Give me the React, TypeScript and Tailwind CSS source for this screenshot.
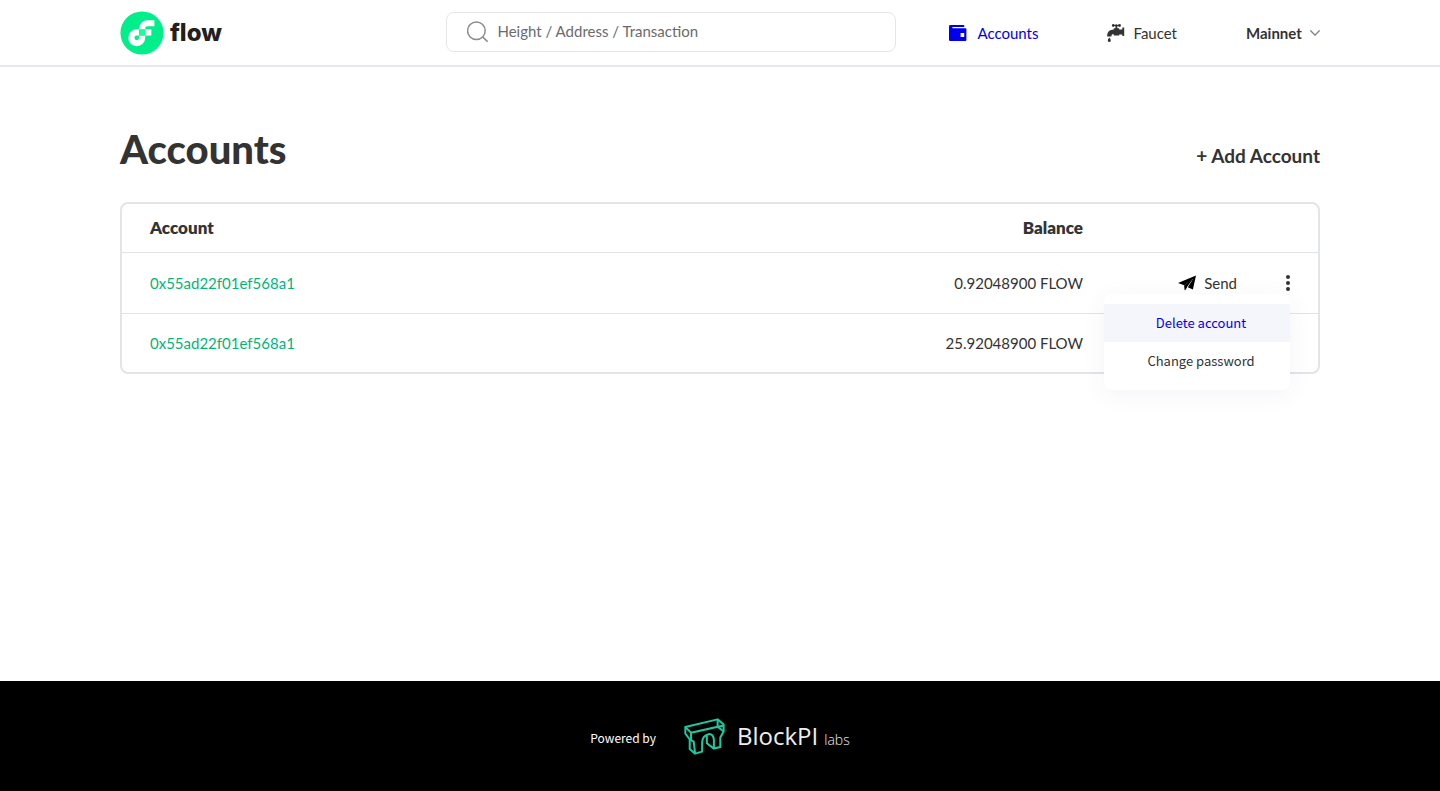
import React from "react";

const accounts = [
  { id: 1, address: "0x55ad22f01ef568a1", balance: "0.92048900 FLOW", open: true },
  { id: 2, address: "0x55ad22f01ef568a1", balance: "25.92048900 FLOW", open: false },
];

function FlowMark() {
  return (
    <svg viewBox="0 0 101 101" className="h-11 w-11" aria-hidden="true">
      <circle cx="50.5" cy="50.5" r="49.5" fill="#00ef8b" />
      <rect x="57.82" y="42.18" width="14.12" height="14.12" fill="#fff" />
      <path
        fill="#fff"
        d="M43.71 61.59a5.3 5.3 0 1 1-5.3-5.3h5.3V42.17h-5.3a19.42 19.42 0 1 0 19.42 19.42v-5.3H43.71Z"
      />
      <path
        fill="#fff"
        d="M63.12 35.12H79V21H63.12a19.43 19.43 0 0 0-19.41 19.42v1.76h14.12v-1.76a5.3 5.3 0 0 1 5.29-5.3Z"
      />
      <path fill="#16ff99" d="M43.71 42.17h14.12v14.12H43.71z" />
    </svg>
  );
}

function SearchIcon() {
  return (
    <svg viewBox="0 0 22 22" className="h-[22px] w-[22px] shrink-0" fill="none" stroke="#8c8c8c" strokeWidth="1.5" aria-hidden="true">
      <circle cx="9.4" cy="9.7" r="8.8" />
      <path d="M15.6 15.9 20.6 20.6" />
    </svg>
  );
}

function WalletIcon() {
  return (
    <svg viewBox="0 0 18 16" className="h-4 w-[18px]" fill="currentColor" aria-hidden="true">
      <path d="M1.4 0H15.2V2.1H3.4V3.3H16.4A1 1 0 0 1 17.4 4.3V15A1 1 0 0 1 16.4 16H1.2A1.2 1.2 0 0 1 0 14.8V1.4A1.4 1.4 0 0 1 1.4 0ZM11.6 8.1V11.9H15.2V8.1Z" fillRule="evenodd" />
    </svg>
  );
}

function FaucetIcon() {
  return (
    <svg viewBox="0 0 18 18" className="h-[18px] w-[18px]" fill="currentColor" aria-hidden="true">
      <circle cx="6.3" cy="1.5" r="1.4" />
      <circle cx="9.4" cy="1.5" r="1.3" />
      <circle cx="12.5" cy="1.5" r="1.4" />
      <path d="M6.3 1H12.5V2.1H10.3V4.2H12.2V5.4H15.3V3.6H17.2V12H15.3V10.5H12.2V11.4H6.8V10.4C5.4 10.2 4.7 10.7 4.5 11.6V12.6H.2V11.2C.4 7.6 2.6 5.5 6.8 5.4V4.2H8.5V2.1H6.3Z" />
      <path d="M2.3 13.6C3.1 14.8 3.8 15.5 3.8 16.4A1.5 1.5 0 0 1 .8 16.4C.8 15.5 1.5 14.8 2.3 13.6Z" />
    </svg>
  );
}

function SendIcon() {
  return (
    <svg viewBox="0 0 18 16" className="h-4 w-[18px]" fill="#000" aria-hidden="true">
      <path d="M18 .5 14.9 14.5 9.8 12.2 15.4 3.6 6.2 10.2 0 8.1Z" />
      <path d="M6.5 10.9 9 12.4 6.7 15.6Z" />
      <path d="M15.8 2.8 8.6 12.4 7 15.2 6.2 10.2Z" />
    </svg>
  );
}

function BridgeMark() {
  return (
    <svg
      viewBox="320 40 122 110"
      className="h-[37px] w-[41px]"
      fill="none"
      stroke="#1dc9a0"
      strokeWidth="6"
      strokeLinejoin="round"
      aria-hidden="true"
    >
      <path d="M324 67 420 44 438 59 438 80 428 98 428 126 409 131 409 105C408 93 402 86 393 88 381 91 374 101 374 113V140L353 146 337 132V104L324 86Z" />
      <path d="M324 67 341 84 438 62M341 84V105M420 44V66L438 80M337 104 349 110 353 146M388 92V115L409 131M420 66 341 84" />
    </svg>
  );
}

function Header() {
  return (
    <header className="border-b-2 border-[#e5e8ec]">
      <div className="mx-auto flex h-[65px] max-w-[1200px] items-center pb-px">
        <a href="#home" aria-label="flow" className="flex items-center gap-[6px] pt-px">
          <FlowMark />
          <span className="font-[Inter] text-2xl leading-8 font-extrabold text-[#231f20]">flow</span>
        </a>
        <label className="mr-[53px] ml-auto flex h-10 w-[450px] items-center gap-2 rounded-lg border border-[#e5e6ea] px-5">
          <SearchIcon />
          <input
            type="text"
            aria-label="Search"
            placeholder="Height / Address / Transaction"
            className="min-w-0 flex-1 pb-[2px] text-[15px] leading-5 outline-none placeholder:text-[#6b6b6b]"
          />
        </label>
        <nav className="flex items-center gap-[69px] pt-[2px] text-[15px] leading-5">
          <a href="#accounts" className="flex items-center gap-[10px] text-[#0000ee]">
            <WalletIcon />
            Accounts
          </a>
          <a href="#faucet" className="flex items-center gap-2">
            <FaucetIcon />
            Faucet
          </a>
          <div className="flex items-center gap-2">
            <select aria-label="Network" className="appearance-none bg-transparent font-bold">
              <option>Mainnet</option>
            </select>
            <svg viewBox="0 0 10 6" className="h-[6px] w-[10px]" fill="none" stroke="#7c828d" strokeWidth="1.3" aria-hidden="true">
              <path d="m.4.4 4.6 4.8L9.6.4" />
            </svg>
          </div>
        </nav>
      </div>
    </header>
  );
}

function AccountMenu() {
  return (
    <div className="absolute top-[calc(50%+11px)] right-7 z-10 flex w-[186px] flex-col rounded-lg bg-white py-[10px] font-['Noto_Sans_CJK_SC',sans-serif] text-[13px] leading-[38px] shadow-[0_4px_24px_rgba(60,70,130,0.06)]">
      <button type="button" className="bg-[#f5f6fb] pl-2 text-[#0000ee]">
        Delete account
      </button>
      <button type="button" className="pl-2">Change password</button>
    </div>
  );
}

function AccountsTable() {
  return (
    <div className="rounded-lg border-2 border-[#e1e4e9]">
      <table className="w-full text-[15px] leading-5">
        <thead>
          <tr className="h-12 border-b border-[#e1e4e9] text-[17px] leading-5">
            <th scope="col" className="pl-7 text-left font-extrabold">Account</th>
            <th scope="col" className="text-right font-extrabold">Balance</th>
            <td className="w-[235px]" />
          </tr>
        </thead>
        <tbody>
          {accounts.map((account) => (
            <tr key={account.id} className="h-[61px] border-[#e1e4e9] not-last:border-b last:h-[59px]">
              <td className="pl-7">
                <a href="#account" className="text-[#00b57c]">{account.address}</a>
              </td>
              <td className="text-right">{account.balance}</td>
              <td className="relative pr-[27px]">
                {account.open && (
                  <>
                    <div className="flex items-center justify-end">
                      <button type="button" className="flex items-center gap-2">
                        <SendIcon />
                        Send
                      </button>
                      <button type="button" aria-label="More actions" className="ml-12">
                        <svg viewBox="0 0 6 18" className="h-[18px] w-[6px]" fill="#333" aria-hidden="true">
                          <circle cx="3" cy="3" r="2" />
                          <circle cx="3" cy="9" r="2" />
                          <circle cx="3" cy="15" r="2" />
                        </svg>
                      </button>
                    </div>
                    <AccountMenu />
                  </>
                )}
              </td>
            </tr>
          ))}
        </tbody>
      </table>
    </div>
  );
}

export default function App() {
  return (
    <div className="flex min-h-screen flex-col bg-white font-[Lato,sans-serif] text-[#333]">
      <Header />
      <main className="mx-auto w-full max-w-[1200px] flex-1 pt-[58px] pb-16">
        <div className="mb-[29px] flex items-center justify-between">
          <h1 className="text-[40px] leading-[48px] font-black">Accounts</h1>
          <button type="button" className="pt-[14px] text-[19px] leading-6 font-bold">
            + Add Account
          </button>
        </div>
        <AccountsTable />
      </main>
      <footer className="flex h-[110px] items-center justify-center gap-7 bg-black text-white">
        <span className="pt-1 font-['Noto_Sans_CJK_SC',sans-serif] text-xs leading-5">Powered by</span>
        <a href="#blockpi" className="flex items-center gap-3">
          <BridgeMark />
          <span className="flex items-baseline gap-[6px] font-['Open_Sans'] text-[#ededed]">
            <span className="text-2xl leading-8">BlockPI</span>
            <span className="text-sm leading-5 font-light">labs</span>
          </span>
        </a>
      </footer>
    </div>
  );
}
